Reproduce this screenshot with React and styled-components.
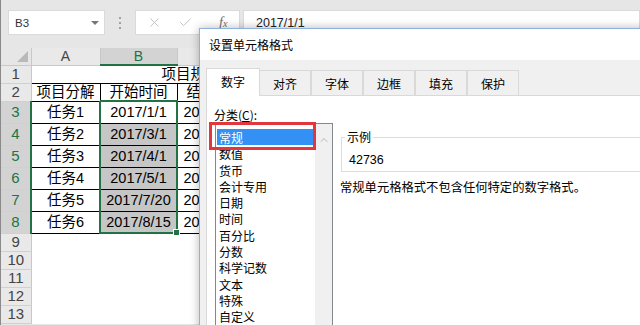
import React from 'react';
import styled, { createGlobalStyle } from 'styled-components';
import { X, Check, ChevronUp } from 'lucide-react';

const GlobalStyle = createGlobalStyle`
  html, body { margin: 0; padding: 0; overflow: hidden; background: #fff; }
`;

const GREEN = '#217346';

const Screen = styled.div`
  position: relative;
  width: 640px;
  height: 325px;
  overflow: hidden;
  background: #e6e6e6;
  border-left: 1px solid #8a8a8a;
  box-sizing: border-box;
  font-family: "Liberation Sans", "Noto Sans CJK SC", sans-serif;
`;

/* ---------- formula bar ---------- */

const FormulaBar = styled.div`
  display: flex;
  height: 25px;
  padding: 10px 0 13px 7px;
`;

const NameBox = styled.div`
  width: 97px;
  box-sizing: border-box;
  display: flex;
  align-items: center;
  justify-content: space-between;
  padding: 0 5px 0 6px;
  background: #fff;
  border: 1px solid #dadada;
  font-size: 11.5px;
  color: #333;
`;

const DropArrow = styled.span`
  width: 0;
  height: 0;
  border-left: 4px solid transparent;
  border-right: 4px solid transparent;
  border-top: 4px solid #777;
`;

const Grip = styled.div`
  width: 30px;
  display: flex;
  flex-direction: column;
  align-items: center;
  justify-content: center;
  gap: 3px;

  span {
    width: 2px;
    height: 2px;
    background: #a0a0a0;
  }
`;

const ActionBox = styled.div`
  width: 105px;
  box-sizing: border-box;
  display: flex;
  align-items: center;
  background: #fff;
  border: 1px solid #dadada;
  padding-left: 11px;
  gap: 16px;
  color: #bcbcbc;
`;

const Fx = styled.span`
  margin-left: 10px;
  font-family: "Liberation Serif", serif;
  font-style: italic;
  font-size: 14px;
  color: #6d6d6d;

  small {
    font-size: 10px;
  }
`;

const Input = styled.div`
  flex: 1;
  margin-left: 3px;
  display: flex;
  align-items: center;
  padding-left: 12px;
  background: #fff;
  border: 1px solid #dadada;
  font-size: 12.5px;
  color: #222;
`;

/* ---------- sheet ---------- */

const Sheet = styled.table`
  border-collapse: collapse;
  table-layout: fixed;
  width: 733px;
  background: #fff;
  font-size: 14.5px;
  line-height: 16px;
  color: #000;
`;

const Col = styled.col`
  width: ${p => p.$w}px;
`;

const Row = styled.tr`
  height: ${p => p.$h}px;
`;

const Corner = styled.th`
  position: relative;
  background: #e6e6e6;
  border-right: 1px solid #c8c8c8;
  border-bottom: 1px solid #c8c8c8;
  padding: 0;

  &::after {
    content: "";
    position: absolute;
    right: 3px;
    bottom: 3px;
    border-left: 11px solid transparent;
    border-bottom: 11px solid #b9b9b9;
  }
`;

const ColHead = styled.th`
  padding: 0;
  font-weight: normal;
  font-size: 14px;
  background: ${p => (p.$active ? '#d3d3d3' : '#e9e9e9')};
  color: ${p => (p.$active ? GREEN : '#444')};
  border-right: 1px solid #c8c8c8;
  border-bottom: ${p => (p.$active ? `2px solid ${GREEN}` : '1px solid #c8c8c8')};
`;

const RowHead = styled.th`
  padding: 0;
  font-weight: normal;
  font-size: 15px;
  background: ${p => (p.$active ? '#d3d3d3' : '#e9e9e9')};
  color: ${p => (p.$active ? GREEN : '#444')};
  border-bottom: 1px solid #d0d0d0;
  border-right: ${p => (p.$active ? `2px solid ${GREEN}` : '1px solid #c8c8c8')};
`;

const Cell = styled.td`
  position: relative;
  padding: 0;
  text-align: center;
  white-space: nowrap;
  overflow: visible;
  background: ${p => p.$fill || '#fff'};
  border: ${p => (p.$boxed ? '1px solid #000' : 'none')};
  border-left: ${p => p.$sel && `2px solid ${GREEN}`};
  border-right: ${p => p.$sel && `2px solid ${GREEN}`};
  border-top: ${p => p.$selTop && `2px solid ${GREEN}`};
  border-bottom: ${p => p.$selBottom && `2px solid ${GREEN}`};
`;

const TitleCell = styled.td`
  padding: 0 0 0 130px;
  text-align: left;
  white-space: nowrap;
  border-bottom: 1px solid #000;
`;

const FillHandle = styled.span`
  position: absolute;
  right: -4px;
  bottom: -4px;
  width: 5px;
  height: 5px;
  background: ${GREEN};
  border: 1px solid #fff;
  z-index: 2;
`;

/* ---------- dialog ---------- */

const Dialog = styled.div`
  position: absolute;
  left: 198px;
  top: 28px;
  width: 470px;
  height: 330px;
  display: flex;
  flex-direction: column;
  background: #f0f0f0;
  border: 1px solid #8fb1de;
  box-shadow: 0 0 9px rgba(0, 0, 0, 0.28);
  font-family: "Noto Sans CJK SC", "Liberation Sans", sans-serif;
  font-size: 12px;
  color: #000;
`;

const TitleBar = styled.div`
  height: 31px;
  display: flex;
  align-items: center;
  padding-left: 9px;
  background: #fff;
`;

const TabStrip = styled.div`
  height: 35px;
  display: flex;
  align-items: flex-end;
  padding-left: 8px;
`;

const Tab = styled.div`
  position: relative;
  width: ${p => (p.$active ? 54 : 52)}px;
  height: ${p => (p.$active ? 28 : 25)}px;
  margin: ${p => (p.$active ? '0 -1px -1px -2px' : '0')};
  box-sizing: border-box;
  display: flex;
  align-items: center;
  justify-content: center;
  padding-top: ${p => (p.$active ? 0 : 1)}px;
  padding-bottom: ${p => (p.$active ? 3 : 0)}px;
  background: ${p => (p.$active ? '#fff' : '#f0f0f0')};
  border: 1px solid #d9d9d9;
  border-bottom: none;
  z-index: ${p => (p.$active ? 2 : 1)};
`;

const Page = styled.div`
  flex: 1;
  display: flex;
  margin-left: 6px;
  padding: 11px 0 0 7px;
  background: #fff;
  border: 1px solid #d9d9d9;
`;

const CategoryCol = styled.div`
  display: flex;
  flex-direction: column;
  width: 119px;
`;

const Label = styled.div`
  height: 16px;
  line-height: 16px;

  u {
    text-decoration: underline;
  }
`;

const ListBox = styled.div`
  flex: 1;
  display: flex;
  margin-left: 1px;
  border: 1px solid #828790;
  background: #fff;
`;

const Items = styled.div`
  flex: 1;
  padding: 5px 2px 0 1px;
`;

const Item = styled.div`
  height: 16.3px;
  line-height: 17.5px;
  padding-left: 2px;
  background: ${p => (p.$selected ? '#3390f4' : 'transparent')};
  color: ${p => (p.$selected ? '#fff' : '#000')};
`;

const ScrollTrack = styled.div`
  width: 17px;
  display: flex;
  justify-content: center;
  padding-top: 10px;
  background: #f0f0f0;
  color: #a8a8a8;
`;

const Highlight = styled.div`
  position: absolute;
  left: 9px;
  top: 93px;
  width: 101px;
  height: 22px;
  border: 3px solid #e2373c;
`;

const Detail = styled.div`
  flex: 1;
  display: flex;
  flex-direction: column;
  margin-left: 8px;
  padding-top: 22px;
`;

const Group = styled.fieldset`
  margin: 0;
  height: 43px;
  box-sizing: border-box;
  padding: 0 0 0 7px;
  border: 1px solid #dcdcdc;
  border-right: none;
  display: flex;
  align-items: flex-start;

  legend {
    padding: 0 2px;
    margin-left: -4px;
    line-height: 16px;
  }
`;

const Sample = styled.span`
  font-family: "Liberation Sans", sans-serif;
  font-size: 12.5px;
  margin-top: 8px;
`;

const Note = styled.div`
  margin-top: 6px;
  margin-left: -1px;
  font-size: 12.3px;
  white-space: nowrap;
`;

const rows = [
  ['任务1', '2017/1/1', '2017/1/31'],
  ['任务2', '2017/3/1', '2017/3/31'],
  ['任务3', '2017/4/1', '2017/4/30'],
  ['任务4', '2017/5/1', '2017/5/31'],
  ['任务5', '2017/7/20', '2017/8/10'],
  ['任务6', '2017/8/15', '2017/9/15'],
];

const tabs = ['数字', '对齐', '字体', '边框', '填充', '保护'];
const categories = ['常规', '数值', '货币', '会计专用', '日期', '时间', '百分比', '分数', '科学记数', '文本', '特殊', '自定义'];

const App = () => {
  return (
    <Screen>
      <GlobalStyle />
      <FormulaBar>
        <NameBox>
          B3
          <DropArrow />
        </NameBox>
        <Grip>
          <span />
          <span />
          <span />
        </Grip>
        <ActionBox>
          <X size={15} strokeWidth={1.4} />
          <Check size={15} strokeWidth={1.4} />
          <Fx>
            f<small>x</small>
          </Fx>
        </ActionBox>
        <Input>2017/1/1</Input>
      </FormulaBar>

      <Sheet>
        <colgroup>
          <Col $w={30} />
          <Col $w={69} />
          <Col $w={77} />
          <Col $w={77} />
          <Col $w={80} />
          <Col $w={80} />
          <Col $w={80} />
          <Col $w={80} />
          <Col $w={80} />
          <Col $w={80} />
        </colgroup>
        <thead>
          <Row $h={17}>
            <Corner />
            <ColHead>A</ColHead>
            <ColHead $active>B</ColHead>
            <ColHead>C</ColHead>
            <ColHead>D</ColHead>
            <ColHead>E</ColHead>
            <ColHead>F</ColHead>
            <ColHead>G</ColHead>
            <ColHead>H</ColHead>
            <ColHead>I</ColHead>
          </Row>
        </thead>
        <tbody>
          <Row $h={18}>
            <RowHead>1</RowHead>
            <TitleCell colSpan={9}>项目规划时间表</TitleCell>
          </Row>
          <Row $h={18}>
            <RowHead>2</RowHead>
            <Cell $boxed>项目分解</Cell>
            <Cell $boxed>开始时间</Cell>
            <Cell $boxed>结束时间</Cell>
            <Cell colSpan={6} />
          </Row>
          {rows.map(([task, start, end], i) => (
            <Row $h={22} key={task}>
              <RowHead $active>{i + 3}</RowHead>
              <Cell $boxed>{task}</Cell>
              <Cell
                $boxed
                $sel
                $selTop={i === 0}
                $selBottom={i === rows.length - 1}
                $fill={i === 0 ? '#fff' : '#c6c6c6'}
              >
                {start}
                {i === rows.length - 1 && <FillHandle />}
              </Cell>
              <Cell $boxed>{end}</Cell>
              <Cell colSpan={6} />
            </Row>
          ))}
          {[9, 10, 11, 12, 13].map(n => (
            <Row $h={18} key={n}>
              <RowHead>{n}</RowHead>
              <Cell colSpan={9} />
            </Row>
          ))}
        </tbody>
      </Sheet>

      <Dialog>
        <TitleBar>设置单元格格式</TitleBar>
        <TabStrip>
          {tabs.map((t, i) => (
            <Tab key={t} $active={i === 0}>
              {t}
            </Tab>
          ))}
        </TabStrip>
        <Page>
          <CategoryCol>
            <Label>
              分类(<u>C</u>):
            </Label>
            <ListBox>
              <Items>
                {categories.map((c, i) => (
                  <Item key={c} $selected={i === 0}>
                    {c}
                  </Item>
                ))}
              </Items>
              <ScrollTrack>
                <ChevronUp size={12} strokeWidth={1.6} />
              </ScrollTrack>
            </ListBox>
          </CategoryCol>
          <Detail>
            <Group>
              <legend>示例</legend>
              <Sample>42736</Sample>
            </Group>
            <Note>常规单元格格式不包含任何特定的数字格式。</Note>
          </Detail>
        </Page>
        <Highlight />
      </Dialog>
    </Screen>
  );
};

export default App;
